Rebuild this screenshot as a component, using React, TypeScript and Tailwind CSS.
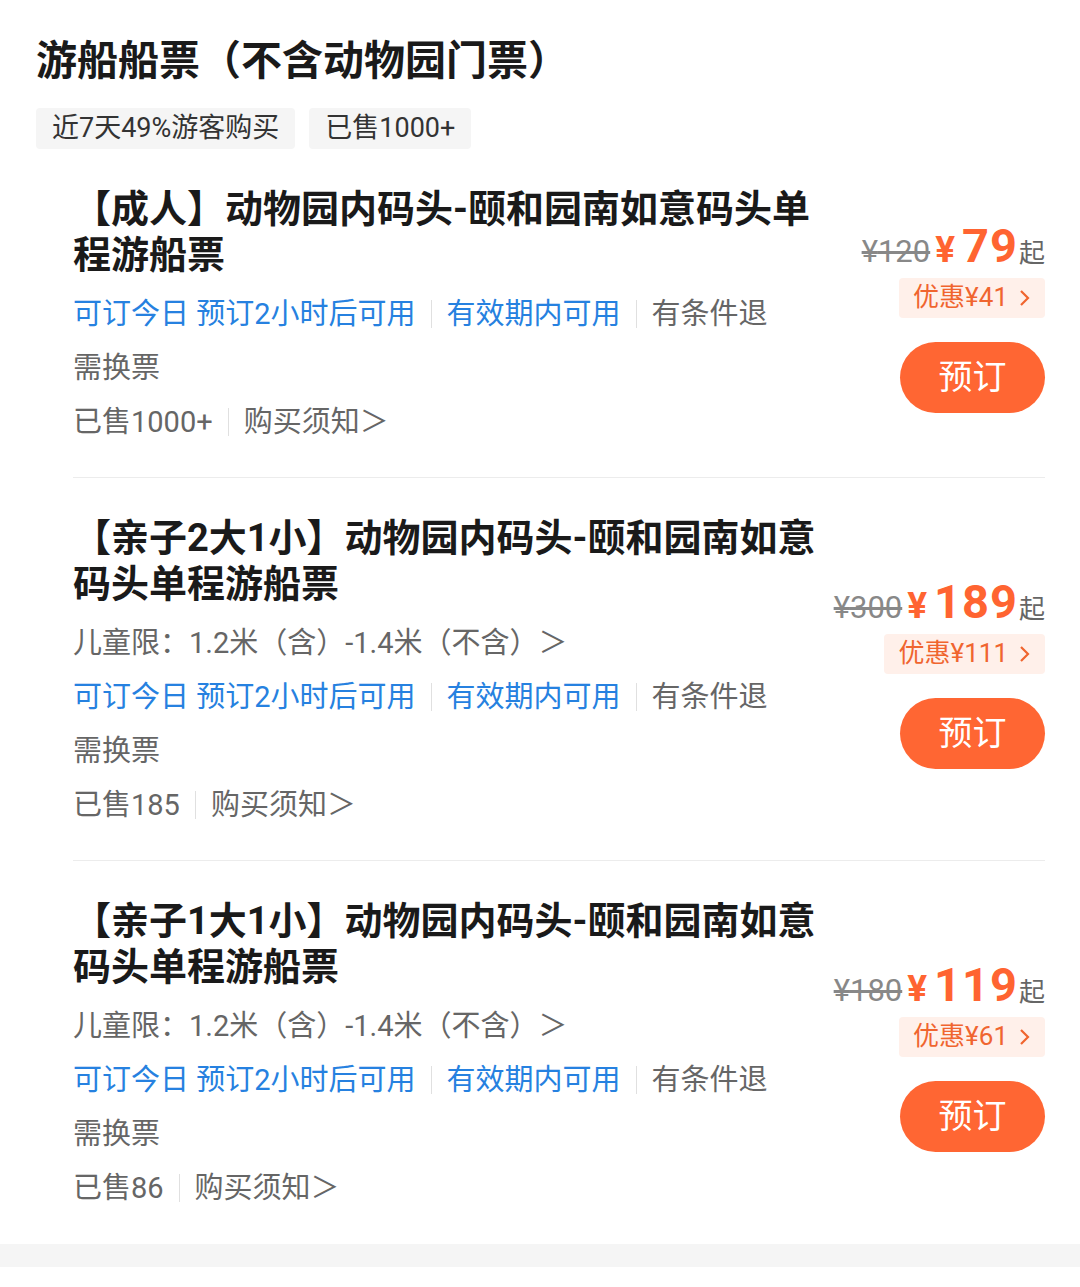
import React from "react";

interface Ticket {
  title: string;
  childLimit?: string;
  sold: string;
  original: string;
  price: string;
  discount: string;
}

const TICKETS: Ticket[] = [
  {
    title: "【成人】动物园内码头-颐和园南如意码头单程游船票",
    sold: "已售1000+",
    original: "120",
    price: "79",
    discount: "41",
  },
  {
    title: "【亲子2大1小】动物园内码头-颐和园南如意码头单程游船票",
    childLimit: "儿童限：1.2米（含）-1.4米（不含）＞",
    sold: "已售185",
    original: "300",
    price: "189",
    discount: "111",
  },
  {
    title: "【亲子1大1小】动物园内码头-颐和园南如意码头单程游船票",
    childLimit: "儿童限：1.2米（含）-1.4米（不含）＞",
    sold: "已售86",
    original: "180",
    price: "119",
    discount: "61",
  },
];

function Sep() {
  return <span className="mx-[15px] inline-block h-[28px] w-px bg-[#e0e0e0]" />;
}

function TicketItem({ ticket, last }: { ticket: Ticket; last: boolean }) {
  return (
    <div
      className={
        last
          ? "flex items-center pt-[37px] pb-[29px]"
          : "flex items-center border-b border-[#ececec] pt-[37px] pb-[28px]"
      }
    >
      <div className="w-[760px] shrink-0">
        <p className="text-[38px] font-bold leading-[46px] text-[#1a1a1a]">
          {ticket.title}
        </p>

        <div className="mt-[9px] text-[29px] leading-[54px] text-[#666]">
          {ticket.childLimit && <p>{ticket.childLimit}</p>}

          <p className="flex items-center">
            <span className="text-[#2681e0]">可订今日 预订2小时后可用</span>
            <Sep />
            <span className="text-[#2681e0]">有效期内可用</span>
            <Sep />
            <span>有条件退</span>
          </p>

          <p>需换票</p>

          <p className="flex items-center">
            <span>{ticket.sold}</span>
            <Sep />
            <span>购买须知＞</span>
          </p>
        </div>
      </div>

      <div className="flex flex-1 flex-col items-end">
        <div className="flex items-baseline whitespace-nowrap leading-none">
          <span className="text-[31px] text-[#888] line-through">
            ¥{ticket.original}
          </span>
          <span className="ml-[5px] mr-[7px] text-[37px] font-bold text-[#ff6431]">
            ¥
          </span>
          <span className="text-[47px] font-bold leading-[46px] tracking-[1px] text-[#ff6431]">
            {ticket.price}
          </span>
          <span className="ml-[1px] text-[26px] text-[#666]">起</span>
        </div>

        <div className="mt-[9px] flex h-[40px] items-center rounded-[4px] bg-[#fff0ea] pl-[14px] pr-[15px] text-[26px] text-[#f0652f]">
          优惠¥{ticket.discount}
          <svg
            className="ml-[11px]"
            width="11"
            height="18"
            viewBox="0 0 11 18"
            fill="none"
            stroke="currentColor"
            strokeWidth="2.2"
          >
            <path d="M2 2l7 7-7 7" />
          </svg>
        </div>

        <button className="mt-6 flex h-[71px] w-[145px] items-center justify-center rounded-full bg-[#ff6633] text-[34px] text-white">
          预订
        </button>
      </div>
    </div>
  );
}

export default function App() {
  return (
    <div className="min-h-[1287px] w-[1080px] bg-white font-['Roboto','Noto_Sans_CJK_SC',sans-serif]">
      <div className="px-[36px] pt-[37px]">
        <h1 className="text-[41px] font-bold leading-[48px] text-[#1a1a1a]">
          游船船票（不含动物园门票）
        </h1>

        <div className="mt-[23px] flex gap-[14px] text-[27px] text-[#333]">
          <span className="flex h-[41px] items-center rounded-[4px] bg-[#f5f5f5] px-4">
            近7天49%游客购买
          </span>
          <span className="flex h-[41px] items-center rounded-[4px] bg-[#f5f5f5] px-4">
            已售1000+
          </span>
        </div>
      </div>

      <div className="ml-[73px] mr-[35px]">
        {TICKETS.map((ticket, i) => (
          <TicketItem
            key={ticket.title}
            ticket={ticket}
            last={i === TICKETS.length - 1}
          />
        ))}
      </div>

      <div className="h-[23px] bg-[#f5f5f5]" />
    </div>
  );
}
